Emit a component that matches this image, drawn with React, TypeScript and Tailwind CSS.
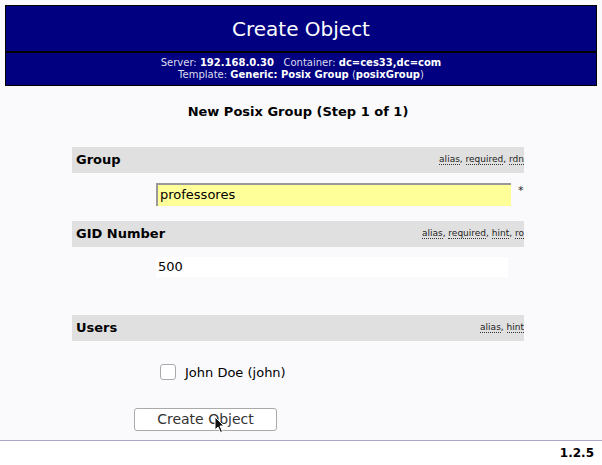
import React from 'react';

const font = { fontFamily: '"DejaVu Sans", Verdana, sans-serif' };

const Hints: React.FC<{ items: string[]; width: string }> = ({ items, width }) => (
  <div className={`${width} overflow-hidden whitespace-nowrap text-right text-[9px] text-[#222]`}>
    {items.map((h, i) => (
      <span key={h}>
        <span className="border-b border-dotted border-[#333]">{h}</span>
        {i < items.length - 1 ? ', ' : ''}
      </span>
    ))}
  </div>
);

const AttrHeader: React.FC<{ label: string; hints: string[]; width: string }> = ({ label, hints, width }) => (
  <div className="flex h-[26px] items-center justify-between bg-[#e0e0e0] pl-[4px]">
    <span className="text-[13px] font-bold text-black">{label}</span>
    <Hints items={hints} width={width} />
  </div>
);

const App: React.FC = () => {
  return (
    <div className="min-h-[465px] w-full bg-white" style={font}>
      <div className="h-[441px] border-b border-[#aaa6c6] bg-[#fafafd] px-[5px] pt-[5px]">
        {/* header */}
        <div className="border border-black bg-[#000080] text-white">
          <div className="flex h-[45px] items-center justify-center pt-[1px] text-[20px]">Create Object</div>
          <div className="border-t-2 border-black pb-[4px] pt-[4px] text-center text-[10px] leading-[12px]">
            <div>
              <span className="text-[#ddddf0]">Server: </span>
              <b>192.168.0.30</b>
              <span className="text-[#ddddf0]">&nbsp;&nbsp; Container: </span>
              <b>dc=ces33,dc=com</b>
            </div>
            <div>
              <span className="text-[#ddddf0]">Template: </span>
              <b>Generic: Posix Group</b>
              <span className="text-[#ddddf0]"> (</span>
              <b>posixGroup</b>
              <span className="text-[#ddddf0]">)</span>
            </div>
          </div>
        </div>

        <h3 className="mt-[16px] pr-[6px] text-center text-[13px] font-bold text-black">New Posix Group (Step 1 of 1)</h3>

        <div className="ml-[67px] mt-[25px] w-[452px]">
          <AttrHeader label="Group" hints={['alias', 'required', 'rdn']} width="w-[90px]" />
          <div className="mt-[10px] flex items-start">
            <div className="ml-[84px] flex h-[23px] w-[355px] items-center border-l-2 border-t-2 border-[#999] bg-[#ffff99] pl-[2px] text-[13px] text-black">
              professores
            </div>
            <span className="ml-[7px] text-[11px] text-[#222]">*</span>
          </div>

          <div className="mt-[15px]">
            <AttrHeader label="GID Number" hints={['alias', 'required', 'hint', 'ro']} width="w-[106px]" />
          </div>
          <div className="ml-[84px] mt-[10px] flex h-[20px] w-[352px] items-center bg-white pl-[2px] text-[13px] text-black">500</div>

          <div className="mt-[38px]">
            <AttrHeader label="Users" hints={['alias', 'hint']} width="w-[48px]" />
          </div>
          <div className="ml-[88px] mt-[22px] flex items-center">
            <div className="h-[16px] w-[16px] rounded-[3px] border border-[#aaa] bg-white" />
            <span className="ml-[9px] text-[13px] text-black">John Doe (john)</span>
          </div>

          <div className="relative ml-[62px] mt-[26px] flex h-[23px] w-[143px] items-center justify-center rounded-[3px] border border-[#aaa] bg-white text-[14px] text-[#333]">
            Create Object
            <svg className="absolute left-[79px] top-[7px]" width="11" height="18" viewBox="0 0 11 18">
              <path d="M1 1 L1 14 L4 11 L6.5 16.5 L8.5 15.5 L6 10 L10 10 Z" fill="#111" stroke="#fff" strokeWidth="1" />
            </svg>
          </div>
        </div>
      </div>
      <div className="pr-[8px] pt-[3px] text-right text-[12px] font-bold text-black">1.2.5</div>
    </div>
  );
};

export default App;
